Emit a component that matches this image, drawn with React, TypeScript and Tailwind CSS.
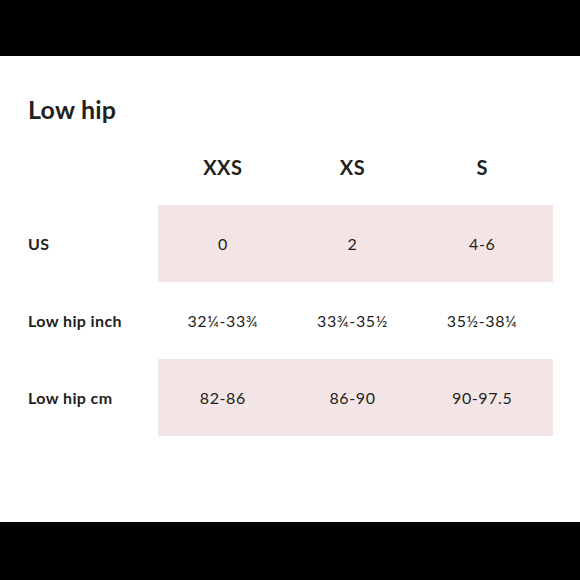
import React from 'react';

interface SizeRow {
  label: string;
  values: string[];
  shaded: boolean;
}

const sizes = ['XXS', 'XS', 'S'];

const rows: SizeRow[] = [
  { label: 'US', values: ['0', '2', '4-6'], shaded: true },
  { label: 'Low hip inch', values: ['32¼-33¾', '33¾-35½', '35½-38¼'], shaded: false },
  { label: 'Low hip cm', values: ['82-86', '86-90', '90-97.5'], shaded: true },
];

export default function App() {
  return (
    <div className="flex h-[580px] w-[580px] flex-col bg-black text-[#231f20]" style={{ fontFamily: 'Lato, "Open Sans", sans-serif' }}>
      <div className="h-[56px] shrink-0" />
      <div className="flex-1 bg-white pl-[28px] pt-[38px]">
        <h1 className="h-[34px] text-[25px] font-bold leading-[30px] tracking-[0.2px]">Low hip</h1>

        {/* Header row */}
        <div className="flex h-[77px] items-center">
          <div className="w-[130px]" />
          <div className="grid w-[395px] grid-cols-3 pr-[6px]">
            {sizes.map((s) => (
              <div key={s} className="text-center text-[20px] font-bold tracking-[0.5px]">
                {s}
              </div>
            ))}
          </div>
        </div>

        {rows.map((row) => (
          <div key={row.label} className="flex h-[77px] items-stretch">
            <div className="flex w-[130px] items-center text-[16px] font-bold tracking-[0.4px]">{row.label}</div>
            <div className={`grid w-[395px] grid-cols-3 items-center pr-[6px] ${row.shaded ? 'bg-[#f3e5e5]' : ''}`}>
              {row.values.map((v, i) => (
                <div key={i} className="text-center text-[16px] tracking-[0.6px]">
                  {v}
                </div>
              ))}
            </div>
          </div>
        ))}
      </div>
      <div className="h-[58px] shrink-0" />
    </div>
  );
}
